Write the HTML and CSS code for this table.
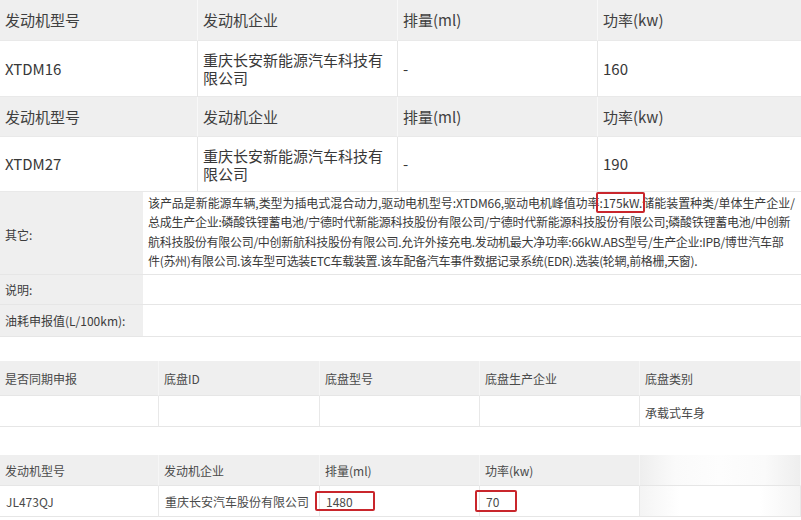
FILE: index.html
```html
<!DOCTYPE html>
<html lang="zh-CN">
<head>
<meta charset="utf-8">
<title>车辆参数</title>
<link rel="stylesheet" href="styles.css">
</head>
<body>
<div class="page">
  <div class="top">
    <div class="th">发动机型号</div>
    <div class="th">发动机企业</div>
    <div class="th">排量(ml)</div>
    <div class="th last">功率(kw)</div>
    <div class="td">XTDM16</div>
    <div class="td">重庆长安新能源汽车科技有限公司</div>
    <div class="td">-</div>
    <div class="td last">160</div>
    <div class="th">发动机型号</div>
    <div class="th">发动机企业</div>
    <div class="th">排量(ml)</div>
    <div class="th last">功率(kw)</div>
    <div class="td">XTDM27</div>
    <div class="td">重庆长安新能源汽车科技有限公司</div>
    <div class="td">-</div>
    <div class="td last">190</div>
  </div>

  <div class="info">
    <div class="lbl">其它:</div>
    <div class="val">
      <span class="ln ln1">该产品是新能源车辆,类型为插电式混合动力,驱动电机型号:XTDM66,驱动电机峰值功率<span class="mark mark-kw">:175kW.</span>储能装置种类/单体生产企业/</span>
      <span class="ln ln2">总成生产企业:磷酸铁锂蓄电池/宁德时代新能源科技股份有限公司/宁德时代新能源科技股份有限公司;磷酸铁锂蓄电池/中创新</span>
      <span class="ln ln3">航科技股份有限公司/中创新航科技股份有限公司.允许外接充电.发动机最大净功率:66kW.ABS型号/生产企业:IPB/博世汽车部</span>
      <span class="ln ln4">件(苏州)有限公司.该车型可选装ETC车载装置.该车配备汽车事件数据记录系统(EDR).选装(轮辋,前格栅,天窗).</span>
    </div>
    <div class="lbl">说明:</div>
    <div class="val"></div>
    <div class="lbl">油耗申报值(L/100km):</div>
    <div class="val"></div>
  </div>

  <div class="chassis">
    <div class="sh">是否同期申报</div>
    <div class="sh">底盘ID</div>
    <div class="sh">底盘型号</div>
    <div class="sh">底盘生产企业</div>
    <div class="sh last">底盘类别</div>
    <div class="sd"></div>
    <div class="sd"></div>
    <div class="sd"></div>
    <div class="sd"></div>
    <div class="sd last">承载式车身</div>
  </div>

  <div class="engine">
    <div class="sh">发动机型号</div>
    <div class="sh">发动机企业</div>
    <div class="sh">排量(ml)</div>
    <div class="sh">功率(kw)</div>
    <div class="sh last wm-h"></div>
    <div class="sd">JL473QJ</div>
    <div class="sd">重庆长安汽车股份有限公司</div>
    <div class="sd"><span class="mark mark-ml">1480</span></div>
    <div class="sd"><span class="mark mark-70">70</span></div>
    <div class="sd last wm-d"></div>
  </div>
</div>
</body>
</html>
```

FILE: styles.css
```css
html, body {
  margin: 0;
  padding: 0;
  background: #ffffff;
}

body {
  font-family: "Noto Sans CJK SC", "Microsoft YaHei", sans-serif;
  color: #3a3a3a;
  width: 801px;
  height: 520px;
  overflow: hidden;
}

.page {
  width: 801px;
}

/* ---------- top engine table ---------- */
.top {
  display: grid;
  grid-template-columns: 198px 200px 200px 1fr;
  grid-template-rows: 41px 56px 40px 55px;
  font-size: 15px;
  line-height: 18px;
}

.th,
.td {
  display: flex;
  align-items: center;
  padding: 0 10px 0 5px;
  border-bottom: 1px solid #e9e9e9;
  border-right: 1px solid #e6e6e6;
}

.th {
  background: #efefef;
  border-right-color: #f8f8f8;
  color: #404040;
}

.td {
  background: #ffffff;
  color: #383838;
}

.top .td:nth-child(6),
.top .td:nth-child(14) {
  padding-top: 1px;
}

.last {
  border-right: none;
}

/* ---------- info rows ---------- */
.info {
  display: grid;
  grid-template-columns: 143px 1fr;
  grid-template-rows: 83px 30px 32px;
  font-size: 12px;
  margin-bottom: 24px;
}

.lbl {
  background: #efefef;
  display: flex;
  align-items: center;
  padding-left: 5px;
  border-bottom: 1px solid #e6e6e6;
  color: #3c3c3c;
}

.lbl:first-child {
  padding-top: 2px;
}

.val {
  background: #ffffff;
  border-bottom: 1px solid #e6e6e6;
  padding: 1px 0 0 5px;
  line-height: 19.4px;
  color: #3a3a3a;
}

.ln {
  display: block;
  white-space: nowrap;
}

.ln1 { letter-spacing: -0.07px; }
.ln2 { letter-spacing: -0.25px; }
.ln3 { letter-spacing: -0.29px; }
.ln4 { letter-spacing: -0.34px; }

/* ---------- chassis / engine tables ---------- */
.chassis,
.engine {
  display: grid;
  grid-template-columns: 159px 161px 160px 160px 1fr;
  font-size: 12px;
  color: #4a4a4a;
}

.chassis {
  grid-template-rows: 35px 31px;
  margin-bottom: 28px;
}

.engine {
  grid-template-rows: 31px 31px;
}

.sh,
.sd {
  display: flex;
  align-items: center;
  padding-left: 5px;
  border-bottom: 1px solid #e6e6e6;
  border-right: 1px solid #e8e8e8;
}

.sh {
  background: #efefef;
  border-right-color: #f6f6f6;
}

.sd {
  background: #ffffff;
}

.chassis .sd.last {
  padding-top: 2px;
}

.engine .sd {
  padding-left: 6px;
}

.wm-h {
  background: linear-gradient(to right, #eeeeee 0%, #fafafa 22%, #fdfdfd 50%, #fafafa 78%, #eeeeee 100%);
}

.wm-d {
  background: linear-gradient(to right, #f4f4f4 0%, #ffffff 25%, #ffffff 75%, #f4f4f4 100%);
}

/* ---------- red annotation boxes ---------- */
.mark {
  position: relative;
}

.mark::after {
  content: "";
  position: absolute;
  border: 2px solid #c9262c;
  border-radius: 2px;
}

.mark-kw::after {
  left: -3px;
  right: -3px;
  top: -2px;
  bottom: -2px;
}

.mark-ml::after {
  left: -11px;
  width: 56px;
  top: -2px;
  height: 16px;
}

.mark-70::after {
  left: -11px;
  width: 38px;
  top: -3px;
  height: 18px;
}
```
